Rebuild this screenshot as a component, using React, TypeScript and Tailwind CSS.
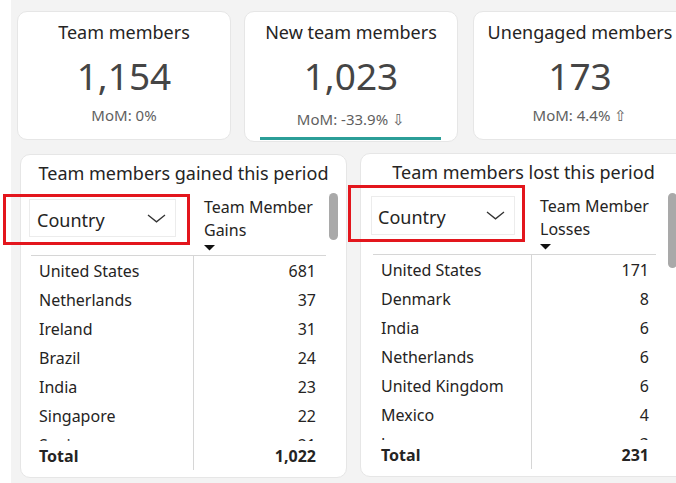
import React from 'react'

type Kpi = {
  title: string
  value: string
  mom: string
  arrow?: string
  active?: boolean
  className: string
}

type Row = { name: string; value: string }

type TableCfg = {
  title: string
  measure: string[]
  rows: Row[]
  total: string
  className: string
  tableClass: string
  col1Class: string
  col2Pad: string
  dropClass: string
  thumbClass: string
}

const kpis: Kpi[] = [
  { title: 'Team members', value: '1,154', mom: 'MoM: 0%', className: 'ml-[6px] h-[129px]' },
  { title: 'New team members', value: '1,023', mom: 'MoM: -33.9%', arrow: '⇩', active: true, className: 'ml-[13px] h-[131px]' },
  { title: 'Unengaged members', value: '173', mom: 'MoM: 4.4%', arrow: '⇧', className: 'ml-[15px] h-[129px]' },
]

const tables: TableCfg[] = [
  {
    title: 'Team members gained this period',
    measure: ['Team Member', 'Gains'],
    rows: [
      { name: 'United States', value: '681' },
      { name: 'Netherlands', value: '37' },
      { name: 'Ireland', value: '31' },
      { name: 'Brazil', value: '24' },
      { name: 'India', value: '23' },
      { name: 'Singapore', value: '22' },
      { name: 'Spain', value: '21' },
    ],
    total: '1,022',
    className: 'ml-[9px] mt-px',
    tableClass: 'ml-[10px] w-[295px]',
    col1Class: 'w-[163px]',
    col2Pad: 'pl-[10px] pr-[10px]',
    dropClass: 'ml-[-2px] mt-[9px] w-[147px] h-[38px] pl-[7px]',
    thumbClass: 'left-[308px] top-[38px] h-[47px]',
  },
  {
    title: 'Team members lost this period',
    measure: ['Team Member', 'Losses'],
    rows: [
      { name: 'United States', value: '171' },
      { name: 'Denmark', value: '8' },
      { name: 'India', value: '6' },
      { name: 'Netherlands', value: '6' },
      { name: 'United Kingdom', value: '6' },
      { name: 'Mexico', value: '4' },
      { name: 'Japan', value: '3' },
    ],
    total: '231',
    className: 'ml-[13px]',
    tableClass: 'ml-[12px] w-[283px]',
    col1Class: 'w-[159px]',
    col2Pad: 'pl-[8px] pr-[7px]',
    dropClass: 'ml-[-2px] mt-[7px] w-[144px] h-[39px] pl-[6px]',
    thumbClass: 'left-[307px] top-[39px] h-[75px]',
  },
]

function KpiCard({ k }: { k: Kpi }) {
  return (
    <div className={`relative w-[214px] shrink-0 rounded-[10px] border border-[#e6e6e6] bg-white flex flex-col items-center ${k.className}`}>
      <div className="mt-[8px] text-[18px] leading-[24px] text-[#252423] whitespace-nowrap">{k.title}</div>
      <div className="mt-[10px] text-[37px] leading-[44px] text-[#454545]">{k.value}</div>
      <div className={`${k.active ? 'mt-[11px]' : 'mt-[7px]'} flex items-center text-[15px] leading-[20px] text-[#5f5f5f] whitespace-nowrap`}>
        {k.mom}
        {k.arrow && <span className="ml-[4px] text-[15px] leading-[20px]">{k.arrow}</span>}
      </div>
      {k.active && <div className="absolute left-[15px] right-[16px] bottom-[1px] h-[3px] bg-[#2b9e98]" />}
    </div>
  )
}

function Chevron() {
  return (
    <svg width="19" height="9" viewBox="0 0 19 9" className="mr-[9px]">
      <polyline points="1,1 9.5,7.8 18,1" fill="none" stroke="#333" strokeWidth="1.3" />
    </svg>
  )
}

function TablePanel({ t }: { t: TableCfg }) {
  return (
    <div className={`relative w-[327px] h-[324px] shrink-0 rounded-[10px] border border-[#e6e6e6] bg-white flex flex-col ${t.className}`}>
      <div className="pt-[6px] text-center text-[18px] leading-[24px] text-[#252423] whitespace-nowrap">{t.title}</div>

      <div className={`flex flex-col text-[#252423] ${t.tableClass}`}>
        {/* header: field picker + measure name */}
        <div className="flex h-[66px] mt-[5px] border-b border-[#d6d6d6]">
          <div className={`shrink-0 ${t.col1Class}`}>
            <div className={`flex items-center justify-between border border-[#ececec] ${t.dropClass}`}>
              <span className="pt-[3px] text-[18px] leading-[24px]">Country</span>
              <Chevron />
            </div>
          </div>
          <div className={`flex-1 pt-[6px] ${t.col2Pad}`}>
            {t.measure.map((m) => (
              <div key={m} className="text-[16px] leading-[23px] whitespace-nowrap">{m}</div>
            ))}
            <svg width="11" height="6" viewBox="0 0 11 6" className="mt-[3px]">
              <polygon points="0,0 11,0 5.5,5.5" fill="#111" />
            </svg>
          </div>
        </div>

        {/* body rows, clipped like a scrolled visual */}
        <div className="h-[185px] overflow-hidden">
          {t.rows.map((r) => (
            <div key={r.name} className="flex h-[29px] items-center text-[16px]">
              <div className={`shrink-0 h-full flex items-center pl-[8px] border-r border-[#d6d6d6] ${t.col1Class}`}>{r.name}</div>
              <div className={`flex-1 text-right ${t.col2Pad}`}>{r.value}</div>
            </div>
          ))}
        </div>

        <div className="flex h-[29px] items-center text-[16px] font-bold">
          <div className={`shrink-0 h-full flex items-center pl-[8px] border-r border-[#d6d6d6] ${t.col1Class}`}>Total</div>
          <div className={`flex-1 text-right ${t.col2Pad}`}>{t.total}</div>
        </div>
      </div>

      <div className={`absolute w-[9px] rounded-full bg-[#a9a9a9] ${t.thumbClass}`} />
    </div>
  )
}

export default function App() {
  return (
    <div className="relative w-[676px] h-[483px] overflow-hidden flex font-['Noto_Sans',sans-serif]">
      <div className="w-[11px] shrink-0 bg-white" />
      <div className="flex-1 bg-[#f3f3f3] flex flex-col">
        <div className="flex items-start pt-[11px]">
          {kpis.map((k) => (
            <KpiCard key={k.title} k={k} />
          ))}
        </div>
        <div className="flex items-start mt-[11px]">
          {tables.map((t) => (
            <TablePanel key={t.title} t={t} />
          ))}
        </div>
      </div>

      {/* highlight boxes drawn over the field pickers */}
      <div className="absolute left-[3px] top-[194px] w-[187px] h-[51px] border-[3px] border-[#e3161d]" />
      <div className="absolute left-[348px] top-[185px] w-[177px] h-[57px] border-[3px] border-[#e3161d]" />
    </div>
  )
}
